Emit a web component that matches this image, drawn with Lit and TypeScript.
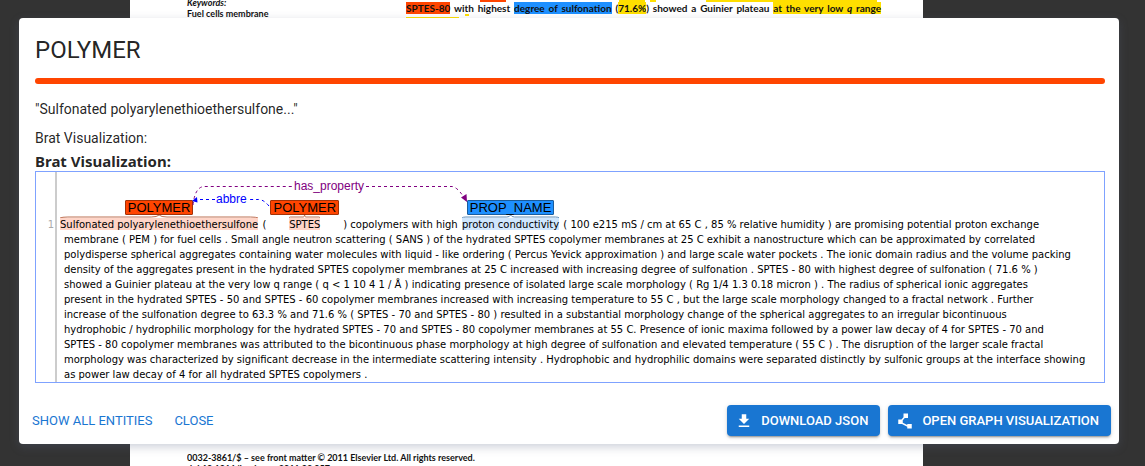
import { LitElement, html, css, svg } from "lit";
import { customElement, property } from "lit/decorators.js";

@customElement("entity-span")
class EntitySpan extends LitElement {
  @property() type = "";
  @property() text = "";
  @property({ reflect: true }) kind = "polymer";

  static styles = css`
    :host {
      display: inline-flex;
      flex-direction: column;
      align-items: center;
      white-space: nowrap;
      --fill: #ff4500;
      --edge: #a33208;
      --tint: #ffd5c8;
    }
    :host([kind="property"]) {
      --fill: #1e90ff;
      --edge: #1a5c9c;
      --tint: #cfe6fd;
    }
    .label {
      box-sizing: border-box;
      height: 15px;
      padding: 0 2px;
      border: 1px solid var(--edge);
      border-radius: 1px;
      background: var(--fill);
      color: #000;
      font: 13px/13px "Liberation Sans", Arial, sans-serif;
    }
    .covered {
      display: flex;
      flex-direction: column;
    }
    .brace {
      display: block;
      width: 0;
      min-width: 100%;
      height: 3px;
    }
    .brace path {
      fill: none;
      stroke: var(--edge);
      opacity: 0.7;
      vector-effect: non-scaling-stroke;
    }
    .mark {
      background: linear-gradient(var(--tint), var(--tint)) 0 0 / 100% 12px no-repeat;
      line-height: 14px;
      color: #000;
    }
  `;

  render() {
    return html`
      <span class="label">${this.type}</span>
      <span class="covered">
        <svg class="brace" viewBox="0 0 100 3" preserveAspectRatio="none" aria-hidden="true">
          <path d="M0 3 Q1 2 4 2 H46 Q49 2 50 0 Q51 2 54 2 H96 Q99 2 100 3" />
        </svg>
        <span class="mark">${this.text}</span>
      </span>
    `;
  }
}

@customElement("brat-view")
class BratView extends LitElement {
  static styles = css`
    :host {
      display: block;
    }
    .canvas {
      position: relative;
      display: grid;
      grid-template-columns: 21px 1fr;
      border: 1px solid #7fa2ff;
      background: #fff;
      overflow: hidden;
      color: #000;
      font: 10px/15px Verdana, "DejaVu Sans", sans-serif;
    }
    .gutter {
      display: flex;
      justify-content: flex-end;
      padding: 45px 1px 0 0;
      border-right: 2px solid #ccc;
      color: #aaa;
    }
    .lines {
      padding: 28px 0 0 7px;
      white-space: pre;
    }
    .first {
      display: flex;
      align-items: flex-end;
      gap: 1px;
      margin-left: -4px;
    }
    .arcs {
      position: absolute;
      top: 0;
      left: 0;
      width: 100%;
      height: 44px;
      font: 12px "Liberation Sans", Arial, sans-serif;
    }
    .arc {
      fill: none;
      stroke-dasharray: 3 3;
    }
    .purple {
      stroke: #800080;
    }
    .blue {
      stroke: #0000ff;
    }
    .purple-fill {
      fill: #800080;
    }
    .blue-fill {
      fill: #0000ff;
    }
  `;

  private rest = [
    "membrane ( PEM ) for fuel cells . Small angle neutron scattering ( SANS ) of the hydrated SPTES copolymer membranes at 25 C exhibit a nanostructure which can be approximated by correlated",
    "polydisperse spherical aggregates containing water molecules with liquid - like ordering ( Percus Yevick approximation ) and large scale water pockets . The ionic domain radius and the volume packing",
    "density of the aggregates present in the hydrated SPTES copolymer membranes at 25 C increased with increasing degree of sulfonation . SPTES - 80 with highest degree of sulfonation ( 71.6 % )",
    "showed a Guinier plateau at the very low q range ( q < 1 10 4 1 / Å ) indicating presence of isolated large scale morphology ( Rg 1/4 1.3 0.18 micron ) . The radius of spherical ionic aggregates",
    "present in the hydrated SPTES - 50 and SPTES - 60 copolymer membranes increased with increasing temperature to 55 C , but the large scale morphology changed to a fractal network . Further",
    "increase of the sulfonation degree to 63.3 % and 71.6 % ( SPTES - 70 and SPTES - 80 ) resulted in a substantial morphology change of the spherical aggregates to an irregular bicontinuous",
    "hydrophobic / hydrophilic morphology for the hydrated SPTES - 70 and SPTES - 80 copolymer membranes at 55 C. Presence of ionic maxima followed by a power law decay of 4 for SPTES - 70 and",
    "SPTES - 80 copolymer membranes was attributed to the bicontinuous phase morphology at high degree of sulfonation and elevated temperature ( 55 C ) . The disruption of the larger scale fractal",
    "morphology was characterized by significant decrease in the intermediate scattering intensity . Hydrophobic and hydrophilic domains were separated distinctly by sulfonic groups at the interface showing",
    "as power law decay of 4 for all hydrated SPTES copolymers .",
  ];

  render() {
    return html`
      <div class="canvas">
        <div class="gutter">1</div>
        <div class="lines"><div class="first"><entity-span type="POLYMER" text="Sulfonated polyarylenethioethersulfone"></entity-span><span> ( </span><entity-span type="POLYMER" text="SPTES"></entity-span><span> ) copolymers with high </span><entity-span kind="property" type="PROP_NAME" text="proton conductivity"></entity-span><span> ( 100 e215 mS / cm at 65 C , 85 % relative humidity ) are promising potential proton exchange</span></div>${this.rest.map((line) => html`<div>${line}</div>`)}</div>
        <svg class="arcs" aria-label="Relations">
          ${svg`
            <path class="arc purple" d="M157 33 Q159 15 168 14.5 H257" />
            <path class="arc purple" d="M330 14.5 H416 Q421 15 427 24" />
            <path class="purple-fill" d="M431 30 L425 25.500 L430.500 22 Z" />
            <text class="purple-fill" x="258" y="18">has_property</text>
            <path class="arc blue" d="M233 34 Q227 27 222 27.500 H212" />
            <path class="arc blue" d="M179 27.500 H161" />
            <path class="blue-fill" d="M156 29 L161 25 L161.500 30.500 Z" />
            <text class="blue-fill" x="180" y="31">abbre</text>
          `}
        </svg>
      </div>
    `;
  }
}

@customElement("app-root")
class AppRoot extends LitElement {
  static styles = css`
    :host {
      display: block;
      position: relative;
      box-sizing: border-box;
      min-height: 100vh;
      padding: 18px 26px 22px 19px;
      background: #333;
      font-family: Roboto, Helvetica, Arial, sans-serif;
    }
    .backdrop {
      position: absolute;
      inset: 0;
      overflow: hidden;
      padding: 0 222px 0 130px;
    }
    .sheet {
      box-sizing: border-box;
      height: 100%;
      display: flex;
      flex-direction: column;
      justify-content: space-between;
      padding: 0 42px 0 57px;
      background: #fff;
      color: #111;
      font: bold 9px/11px Lato, sans-serif;
    }
    .top {
      display: grid;
      grid-template-columns: 219px 1fr;
    }
    .keywords {
      margin-top: -3px;
    }
    .strip {
      display: flex;
      height: 3px;
    }
    .abstract-line {
      text-align-last: justify;
      font-size: 10px;
      line-height: 11px;
    }
    .strip i {
      display: block;
      height: 2px;
    }
    .red {
      background: #ff4500;
    }
    .blue {
      background: #1e90ff;
    }
    .yellow {
      background: #ffdf00;
    }
    .foot {
      height: 14px;
      overflow: hidden;
    }
    .foot div {
      white-space: nowrap;
    }
    .dialog {
      position: relative;
      display: flex;
      flex-direction: column;
      background: #fff;
      border-radius: 4px;
      color: rgba(0, 0, 0, 0.87);
      box-shadow: 0 3px 10px rgba(90, 100, 130, 0.3);
    }
    .content {
      padding: 16px 14px 0 16px;
    }
    .title {
      margin: 0;
      font-size: 24px;
      font-weight: 400;
      line-height: 32px;
    }
    .bar {
      height: 6px;
      margin: 12px 0 16px;
      border: 0;
      border-radius: 3px;
      background: #ff4500;
    }
    .line {
      margin: 0 0 11px;
      font-size: 14px;
      line-height: 18px;
    }
    .caption {
      margin: -6px 0 0;
      font: bold 15px/19px "Noto Sans", sans-serif;
    }
    .actions {
      display: flex;
      gap: 8px;
      padding: 22px 8px 8px 6px;
    }
    .spacer {
      flex: 1;
    }
    button {
      display: inline-flex;
      align-items: center;
      padding: 4px 7px;
      border: 0;
      border-radius: 4px;
      background: transparent;
      color: #1976d2;
      font: 400 13px/23px Roboto, Helvetica, Arial, sans-serif;
      text-transform: uppercase;
      white-space: nowrap;
      cursor: pointer;
    }
    button.contained {
      padding: 4px 12px;
      background: #1976d2;
      color: #fff;
      font-weight: 500;
      box-shadow: 0 3px 1px -2px rgba(0, 0, 0, 0.2), 0 2px 2px rgba(0, 0, 0, 0.14), 0 1px 5px rgba(0, 0, 0, 0.12);
    }
    button svg {
      width: 18px;
      height: 18px;
      margin: 0 8px 0 -4px;
      fill: currentColor;
    }
  `;

  render() {
    return html`
      <div class="backdrop" aria-hidden="true">
        <div class="sheet">
          <div class="top">
            <div class="keywords"><em>Keywords:</em><br />Fuel cells membrane</div>
            <div>
              <div class="strip">
                <i class="red" style="width:26px;margin-left:74px"></i>
                <i class="yellow" style="width:26px;margin-left:113px"></i>
                <i class="yellow" style="width:6px;margin-left:5px"></i>
                <i class="yellow" style="width:171px;margin-left:50px"></i>
              </div>
              <div class="abstract-line">
                <span class="red">SPTES-80</span> with highest <span class="blue">degree of sulfonation</span>
                (<span class="yellow">71.6%</span>) showed a Guinier plateau
                <span class="yellow">at the very low <em>q</em> range</span>
              </div>
              <div class="strip">
                <i class="yellow" style="width:53px;margin-top:3px"></i>
                <i class="yellow" style="width:4px;margin-left:6px"></i>
              </div>
            </div>
          </div>
          <div class="foot">
            <div>0032-3861/$ – see front matter © 2011 Elsevier Ltd. All rights reserved.</div>
            <div>doi:10.1016/j.polymer.2011.02.057</div>
          </div>
        </div>
      </div>
      <div class="dialog" role="dialog" aria-labelledby="title">
        <div class="content">
          <h2 class="title" id="title">POLYMER</h2>
          <hr class="bar" />
          <p class="line">"Sulfonated polyarylenethioethersulfone..."</p>
          <p class="line">Brat Visualization:</p>
          <h3 class="caption">Brat Visualization:</h3>
          <brat-view></brat-view>
        </div>
        <div class="actions">
          <button type="button">Show all entities</button>
          <button type="button">Close</button>
          <span class="spacer"></span>
          <button type="button" class="contained">
            <svg viewBox="0 0 24 24" aria-hidden="true"><path d="M5 20h14v-2H5v2zM19 9h-4V3H9v6H5l7 7 7-7z" /></svg>
            Download JSON
          </button>
          <button type="button" class="contained">
            <svg viewBox="0 0 24 24" aria-hidden="true"><path d="M15 16v1.260l-6-3v-3.170L11.700 8H16V2h-6v4.900L7.300 10H3v6h5l7 3.500V22h6v-6z" /></svg>
            Open graph visualization
          </button>
        </div>
      </div>
    `;
  }
}
